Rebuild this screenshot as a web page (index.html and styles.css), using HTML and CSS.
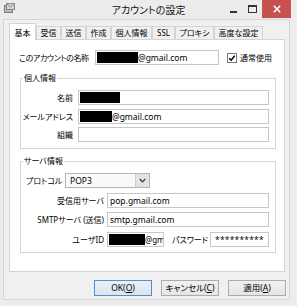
FILE: index.html
```html
<!DOCTYPE html>
<html lang="ja">
<head>
<meta charset="utf-8">
<title>アカウントの設定</title>
<link rel="stylesheet" href="styles.css">
</head>
<body>
<div class="window">
  <div class="titlebar">
    <svg class="app-icon" viewBox="0 0 11 10" width="11" height="10">
      <rect x="0.5" y="2.5" width="8" height="7" fill="#b9b9b9" stroke="#7d7d7d"/>
      <rect x="2.5" y="0.5" width="8" height="6" fill="#d6d6d6" stroke="#8a8a8a"/>
      <path d="M3 1 L6.5 4 L10 1" fill="none" stroke="#8a8a8a"/>
    </svg>
    <div class="title">アカウントの設定</div>
    <div class="caption">
      <div class="cap cap-min"><span></span></div>
      <div class="cap cap-max"><span></span></div>
      <div class="cap cap-close">
        <svg viewBox="0 0 8 8" width="8" height="8"><path d="M0.8 0.8 L7.2 7.2 M7.2 0.8 L0.8 7.2" stroke="#fff" stroke-width="1.6"/></svg>
      </div>
    </div>
  </div>
  <div class="client">
    <div class="tabs">
      <div class="tab active">基本</div>
      <div class="tab">受信</div>
      <div class="tab">送信</div>
      <div class="tab">作成</div>
      <div class="tab">個人情報</div>
      <div class="tab tab-ssl">SSL</div>
      <div class="tab">プロキシ</div>
      <div class="tab">高度な設定</div>
    </div>
    <div class="panel">
      <div class="row-account">
        <span class="lbl-account">このアカウントの名称</span>
        <div class="input input-account"><span class="redact redact-account"></span>@gmail.com</div>
        <div class="check">
          <span class="check-box"><svg viewBox="0 0 8 8" width="8" height="8"><path d="M1.2 4.2 L3.2 6.2 L6.8 1.6" fill="none" stroke="#000" stroke-width="1.5"/></svg></span>
          <span>通常使用</span>
        </div>
      </div>
      <fieldset class="group">
        <legend>個人情報</legend>
        <div class="rows rows-personal">
          <span class="lbl">名前</span>
          <div class="input"><span class="redact redact-name"></span></div>
          <span class="lbl">メールアドレス</span>
          <div class="input"><span class="redact redact-mail"></span>@gmail.com</div>
          <span class="lbl">組織</span>
          <div class="input"></div>
        </div>
      </fieldset>
      <fieldset class="group group-server">
        <legend>サーバ情報</legend>
        <div class="rows rows-server">
          <div class="proto-row">
            <span class="lbl-proto">プロトコル</span>
            <div class="select">
              <span class="select-val">POP3</span>
              <span class="select-arrow"><svg viewBox="0 0 7 5" width="7" height="5"><path d="M0.8 1 L3.5 3.8 L6.2 1" fill="none" stroke="#333" stroke-width="1.2"/></svg></span>
            </div>
          </div>
          <span class="lbl">受信用サーバ</span>
          <div class="input">pop.gmail.com</div>
          <span class="lbl">SMTPサーバ (送信)</span>
          <div class="input">smtp.gmail.com</div>
          <span class="lbl">ユーザID</span>
          <div class="user-row">
            <div class="input input-user"><span class="redact redact-user"></span>@gm</div>
            <span class="lbl-pw">パスワード</span>
            <div class="input input-pw">**********</div>
          </div>
        </div>
      </fieldset>
    </div>
    <div class="buttons">
      <div class="btn btn-default">OK(<u>O</u>)</div>
      <div class="btn">キャンセル(<u>C</u>)</div>
      <div class="btn">適用(<u>A</u>)</div>
    </div>
  </div>
</div>
</body>
</html>
```

FILE: styles.css
```css
* {
  box-sizing: border-box;
  margin: 0;
  padding: 0;
}

html, body {
  width: 297px;
  height: 306px;
  overflow: hidden;
}

body {
  background: #ececec;
  font-family: "Noto Sans", "Noto Sans CJK JP", sans-serif;
  font-size: 8px;
  color: #000;
  font-feature-settings: "palt";
}

.window {
  width: 297px;
  height: 306px;
  display: flex;
  flex-direction: column;
  background: #ececec;
}

.titlebar {
  height: 19px;
  flex: none;
  display: grid;
  grid-template-columns: 1fr auto 1fr;
  align-items: start;
}

.app-icon {
  display: block;
  margin: 3px 0 0 4px;
}

.title {
  font-family: "Noto Sans CJK JP", sans-serif;
  font-size: 10px;
  line-height: 20px;
  color: #111;
}

.caption {
  justify-self: end;
  display: flex;
  margin-right: 6px;
}

.cap {
  width: 19px;
  height: 18px;
  display: flex;
  align-items: center;
  justify-content: center;
}

.cap-min span {
  width: 7px;
  height: 2px;
  background: #333;
  margin-top: 6px;
}

.cap-max span {
  width: 9px;
  height: 8px;
  border: 1px solid #333;
  border-top-width: 2px;
  margin-top: -1px;
}

.cap-close {
  width: 29px;
  background: #c75050;
}

.cap-close svg {
  display: block;
}

.client {
  flex: 1;
  margin: 0 7px 6px 3px;
  background: #f0f0f0;
  border: 1px solid #d6d6d6;
  display: flex;
  flex-direction: column;
}

.tabs {
  display: flex;
  align-items: flex-end;
  height: 16px;
  margin: 3px 0 0 5px;
}

.tab {
  height: 13px;
  line-height: 12px;
  padding: 0 3.5px;
  border: 1px solid #d4d4d4;
  border-bottom: none;
  background: #f0f0f0;
  font-family: "Noto Sans CJK JP", sans-serif;
  font-size: 8px;
  white-space: nowrap;
}

.tab-ssl {
  font-family: "Noto Sans", sans-serif;
  padding: 0 4px;
}

.tab.active {
  height: 17px;
  margin-bottom: -1px;
  padding: 3px 4.5px 0;
  background: #fff;
  position: relative;
  z-index: 1;
}

.panel {
  margin-left: 5px;
  width: 276px;
  height: 233px;
  flex: none;
  border: 1px solid #d4d4d4;
  background: #fff;
  padding-top: 10px;
}

.row-account {
  display: flex;
  align-items: center;
  height: 15px;
  margin-left: 9px;
}

.lbl-account {
  width: 76px;
  white-space: nowrap;
  letter-spacing: -0.4px;
}

.input {
  height: 15px;
  border: 1px solid #c6c6c6;
  background: #fff;
  line-height: 13px;
  padding: 0 2px;
  white-space: nowrap;
  overflow: hidden;
  display: flex;
  align-items: center;
  font-size: 8.5px;
}

.input-account {
  width: 124px;
}

.redact {
  display: inline-block;
  flex: none;
  height: 11px;
  background: #000;
  margin-left: -1px;
}

.redact-account { width: 41px; }
.redact-name { width: 40px; }
.redact-mail { width: 32px; }
.redact-user { width: 36px; }

.check {
  display: flex;
  align-items: center;
  margin-left: 8px;
  white-space: nowrap;
}

.check-box {
  width: 10px;
  height: 10px;
  border: 1px solid #7a7a7a;
  background: #fff;
  margin-right: 3px;
  display: flex;
  align-items: center;
  justify-content: center;
}

.check-box svg {
  display: block;
}

.group {
  margin: 7px 8px 0 10px;
  border: 1px solid #d6d6d6;
  min-inline-size: 0;
}

.group legend {
  line-height: 12px;
  padding: 0 1px;
  margin-left: 2px;
}

.group-server {
  margin-top: 6px;
}

.rows {
  display: grid;
  align-items: center;
}

.rows-personal {
  grid-template-columns: 52px 1fr;
  column-gap: 5px;
  row-gap: 3.5px;
  padding: 6px 6px 6px 0;
}

.rows-server {
  grid-template-columns: 83px 1fr;
  column-gap: 3px;
  row-gap: 4.5px;
  padding: 6px 6px 5.5px 0;
}

.lbl {
  text-align: right;
  white-space: nowrap;
}

.proto-row {
  grid-column: 1 / -1;
  display: flex;
  align-items: center;
}

.lbl-proto {
  width: 44px;
  padding-left: 5px;
  white-space: nowrap;
}

.select {
  width: 85px;
  height: 15px;
  border: 1px solid #b4b4b4;
  background: #f9f9f9;
  display: flex;
  font-size: 8.5px;
}

.select-val {
  flex: 1;
  line-height: 13px;
  padding-left: 4px;
}

.select-arrow {
  width: 14px;
  background: #e3e3e3;
  border-left: 1px solid #cfcfcf;
  display: flex;
  align-items: center;
  justify-content: center;
}

.select-arrow svg {
  display: block;
}

.user-row {
  display: flex;
  align-items: center;
}

.input-user {
  width: 57px;
  flex: none;
  padding-right: 0;
  font-size: 8px;
}

.lbl-pw {
  width: 38px;
  margin-left: 8px;
  white-space: nowrap;
}

.input-pw {
  flex: 1;
  padding-left: 4px;
  letter-spacing: 0.2px;
}

.buttons {
  display: flex;
  justify-content: flex-end;
  gap: 9px;
  margin-top: 8px;
  padding-right: 3px;
}

.btn {
  width: 58px;
  height: 16px;
  border: 1px solid #acacac;
  background: linear-gradient(#f0f0f0, #e5e5e5);
  line-height: 14px;
  text-align: center;
  white-space: nowrap;
  font-size: 8.5px;
}

.btn-default {
  border-color: #4f8fd0;
  background: linear-gradient(#eaf0f6, #dde5ee);
}
```
